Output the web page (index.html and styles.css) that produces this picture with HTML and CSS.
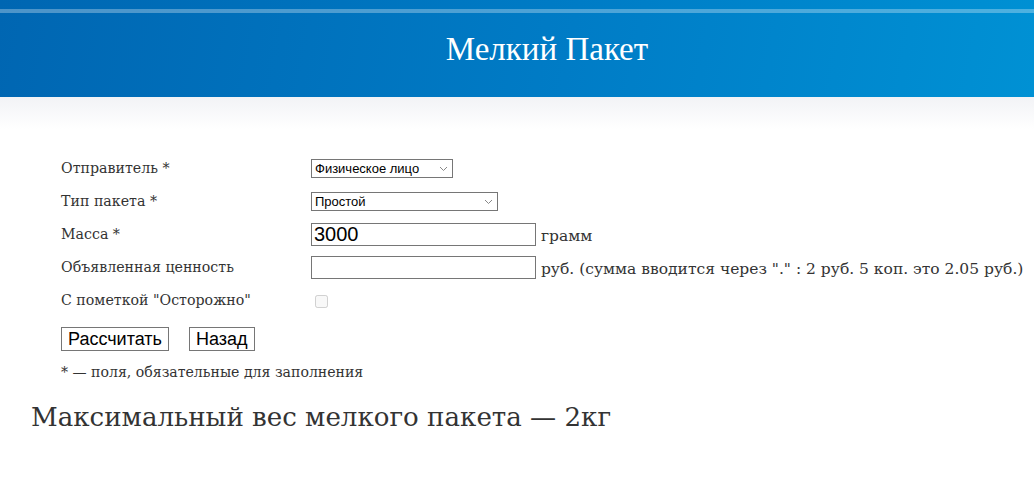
FILE: index.html
```html
<!DOCTYPE html>
<html lang="ru">
<head>
  <meta charset="UTF-8">
  <title>Мелкий Пакет</title>
  <link rel="stylesheet" href="styles.css">
</head>
<body>

  <header class="top">
    <h1>Мелкий Пакет</h1>
  </header>
  <div class="shade"></div>

  <div class="content">
    <form class="calc">
      <label>Отправитель *</label>
      <div>
        <span class="select-wrap">
          <select class="sel-sender"><option>Физическое лицо</option></select>
          <svg class="chevron" width="9" height="6" viewBox="0 0 9 6"><path d="M1 1l3.5 3.5L8 1" fill="none" stroke="#888" stroke-width="1"/></svg>
        </span>
      </div>

      <label>Тип пакета *</label>
      <div>
        <span class="select-wrap">
          <select class="sel-type"><option>Простой</option></select>
          <svg class="chevron" width="9" height="6" viewBox="0 0 9 6"><path d="M1 1l3.5 3.5L8 1" fill="none" stroke="#888" stroke-width="1"/></svg>
        </span>
      </div>

      <label>Масса *</label>
      <div class="value"><input type="text" class="field" value="3000"> грамм</div>

      <label>Объявленная ценность</label>
      <div class="value"><input type="text" class="field"> руб. (сумма вводится через "." : 2 руб. 5 коп. это 2.05 руб.)</div>

      <label>С пометкой "Осторожно"</label>
      <div><input type="checkbox" disabled></div>
    </form>

    <div class="buttons">
      <button type="button">Рассчитать</button>
      <button type="button">Назад</button>
    </div>

    <p class="note">* — поля, обязательные для заполнения</p>

    <h2>Максимальный вес мелкого пакета — 2кг</h2>
  </div>

</body>
</html>
```

FILE: styles.css
```css
body {
  margin: 0;
  font-family: "DejaVu Serif", serif;
  color: #333;
  background: #fff;
}

.top {
  height: 97px;
  background: linear-gradient(100deg, #0066b2 0%, #007cc6 55%, #0091d4 100%);
  position: relative;
  display: flex;
  justify-content: center;
  align-items: center;
}

.top::before {
  content: "";
  position: absolute;
  left: 0;
  right: 0;
  top: 9px;
  height: 4px;
  background: rgba(255, 255, 255, 0.3);
}

.top h1 {
  margin: 0;
  padding: 2px 0 0 60px;
  font-family: "Liberation Serif", serif;
  font-weight: normal;
  font-size: 33px;
  color: #fff;
}

.shade {
  height: 32px;
  background: linear-gradient(#f2f3f6, #fff);
}

.content {
  padding: 0 0 0 61px;
}

.calc {
  display: grid;
  grid-template-columns: 250px auto;
  grid-auto-rows: 33px;
  align-items: center;
  padding-top: 23px;
  font-size: 14.2px;
}

.calc label {
  margin-top: -1px;
}

.calc .value {
  font-size: 15.5px;
}

.select-wrap {
  position: relative;
  display: inline-block;
  vertical-align: middle;
}

select {
  appearance: none;
  font-family: Arial, "Liberation Sans", sans-serif;
  font-size: 13px;
  height: 19px;
  border: 1px solid #767676;
  border-radius: 0;
  background: #fff;
  color: #000;
  padding: 0 0 0 3px;
  display: block;
}

.chevron {
  position: absolute;
  right: 5px;
  top: 7px;
  pointer-events: none;
}

.sel-sender {
  width: 142px;
}

.sel-type {
  width: 187px;
}

.field {
  width: 225px;
  height: 23px;
  box-sizing: border-box;
  border: 1px solid #767676;
  padding: 0 2px;
  font-family: Arial, "Liberation Sans", sans-serif;
  font-size: 20px;
  color: #000;
  margin: 0;
}

input[type="checkbox"] {
  margin: 5px 3px 1px 4px;
  width: 13px;
  height: 13px;
}

.buttons {
  display: flex;
  gap: 20px;
  margin-top: 10px;
}

.buttons button {
  font-family: Arial, "Liberation Sans", sans-serif;
  font-size: 18px;
  height: 24px;
  padding: 0 6px;
  border: 1px solid #767676;
  border-radius: 0;
  background: #fff;
  color: #000;
}

.note {
  margin: 13px 0 0 0;
  font-size: 14.1px;
}

h2 {
  margin: 22px 0 0 -30px;
  font-weight: normal;
  font-size: 26.1px;
  color: #333;
}
```
